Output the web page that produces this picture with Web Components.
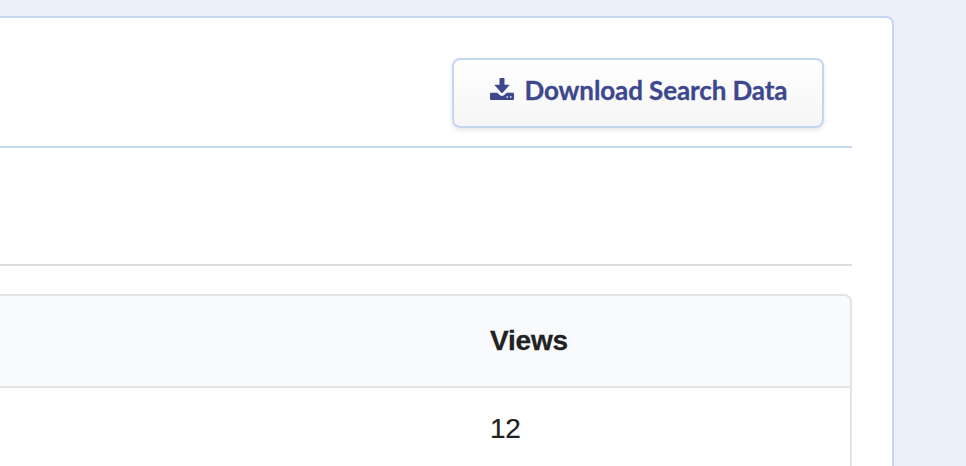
<!DOCTYPE html>
<html lang="en"><head><meta charset="utf-8"><title>Search data</title>
<style>html,body{margin:0;height:466px;overflow:hidden;background:#ecf0fa}</style></head><body>
<search-panel><download-button slot="action">Download Search Data</download-button><views-table><span slot="head">Views</span><span slot="value">12</span></views-table></search-panel>
<script>
const define=(name,html)=>customElements.define(name,class extends HTMLElement{constructor(){super();this.attachShadow({mode:'open'}).innerHTML=html}});
define('search-panel',`<style>
:host{display:block;box-sizing:border-box;padding-top:16px;height:466px;overflow:hidden;background:#ecf0fa}
section{box-sizing:border-box;width:894px;height:470px;background:#fff;border:2px solid #c5d6f1;border-left:0;border-radius:0 8px 0 0;padding-right:40px}
header{box-sizing:border-box;height:130px;padding:40px 28px 0 0;display:flex;justify-content:flex-end;align-items:flex-start;border-bottom:2px solid #c5d6f1}
.filter{box-sizing:border-box;height:118px;border-bottom:2px solid #dddddd;margin-bottom:28px}
</style><section><header><slot name="action"></slot></header><div class="filter"></div><slot></slot></section>`);
define('download-button',`<style>
:host{display:block}
button{box-sizing:border-box;width:372px;height:70px;margin:0;padding:0 0 6px 36px;display:flex;align-items:center;justify-content:flex-start;gap:10.500px;border:2px solid #c5d6f1;border-radius:8px;background:linear-gradient(#fff,#f5f5f5);box-shadow:0 2px 4px rgba(0,0,0,.1);color:#3d478e;font:700 26px Lato,sans-serif;letter-spacing:-.11px;-webkit-text-stroke:.3px #3d478e;white-space:nowrap}
svg{width:24px;height:22px;flex:none;margin-top:-2px}
</style><button><svg viewBox="0 0 24 22" fill="currentColor"><path d="M10.200 0h3.600q.7 0 .7.700V6.800h4.300q1 0 .3.800l-6.400 7.200q-.7.700-1.400 0L4.900 7.600Q4.200 6.800 5.200 6.800h4.300V.7q0-.7.700-.7z"/><path fill-rule="evenodd" d="M1.200 14.700H7.300l2.700 2.600q2 1.500 4 0l2.700-2.600h6.100q1.200 0 1.200 1.200v4.900q0 1.200-1.200 1.200H1.200Q0 22 0 20.800v-4.900q0-1.200 1.200-1.200zM16.500 18.300v1.400h1.400v-1.400zM20 18.300v1.400h1.400v-1.400z"/></svg><span><slot></slot></span></button>`);
define('views-table',`<style>
:host{display:block;box-sizing:border-box;width:852px;height:200px;border:2px solid #e2e3e3;border-left:0;border-radius:0 8px 0 0;overflow:hidden;font:28px/32px "Liberation Sans",sans-serif;color:#212121}
.head{box-sizing:border-box;height:92px;padding:29px 0 0 490px;background:#f9fafc;border-bottom:2px solid #e2e3e3;font-weight:700;letter-spacing:-.2px;-webkit-text-stroke:.3px #212121}
.cell{padding:25px 0 0 490px;letter-spacing:-.3px;-webkit-text-stroke:.2px #212121}
</style><div class="head"><slot name="head"></slot></div><div class="cell"><slot name="value"></slot></div>`);
</script></body></html>
